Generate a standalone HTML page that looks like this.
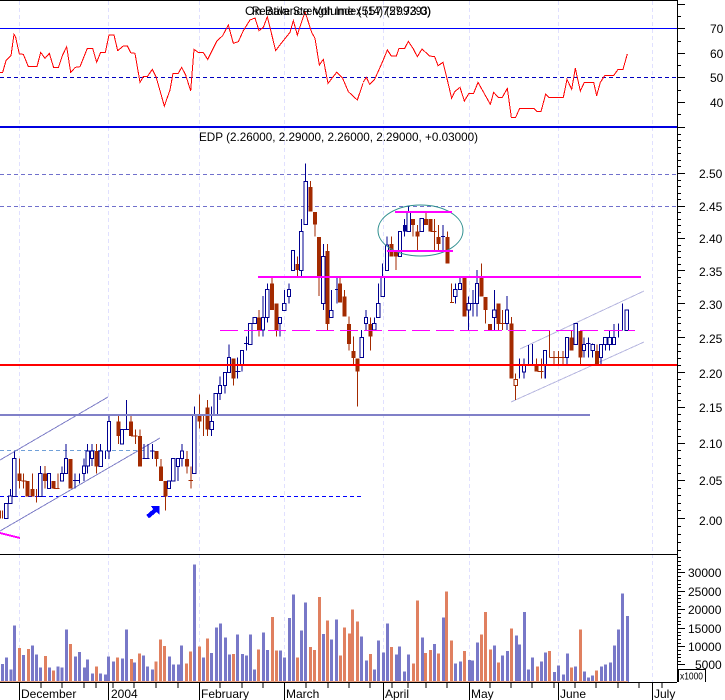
<!DOCTYPE html>
<html><head><meta charset="utf-8"><style>
html,body{margin:0;padding:0;background:#fff;width:725px;height:700px;overflow:hidden}
svg{display:block}
text{font-family:"Liberation Sans",Arial,sans-serif;font-size:12px;fill:#000}
</style></head><body>
<svg width="725" height="700" viewBox="0 0 725 700" xmlns="http://www.w3.org/2000/svg" shape-rendering="crispEdges">
<rect width="725" height="700" fill="#fff"/>
<!-- vertical grid -->
<path d="M19.5 1V682M108.5 1V682M199.5 1V682M284.5 1V682M383.5 1V682M469.5 1V682M558.5 1V682M652.5 1V682" stroke="#e0e0ff" stroke-width="1" stroke-dasharray="4 3" fill="none"/>
<!-- RSI panel -->
<path d="M0 28.5H677" stroke="#0000ff"/>
<path d="M0 77.5H677" stroke="#0000c0" stroke-dasharray="4 3"/>
<g fill="none" stroke="#ff0000" stroke-width="3" transform="scale(.33333)">
<path d="M0 217 8 217 18 182 33 167 42 103 47 112 58 162 70 163 85 200 111 200 122 157 135 175 148 160 161 203 175 203 187 167 200 140 212 217 226 202 240 200 262 145 278 145 290 187 302 157 316 157 327 105 342 105 353 152 370 138 382 138 392 158 405 160 420 247 430 230 442 230 457 208 468 230 493 318 510 270 519 220 535 220 545 202 557 225 572 273 582 148 596 158 610 158 623 178 650 124 668 107 685 75 700 130 715 125 730 92 750 60 765 54 777 92 790 82 802 50 827 152 842 132 870 97 880 62 892 105 915 35 935 97 945 115 958 195 970 178 984 250 1010 217 1028 235 1045 275 1072 300 1089 250"/>
</g>
<g fill="none" stroke="#ff0000" stroke-width="3" transform="translate(363,0) scale(.33333)">
<path d="M0 247 10 232 20 253 35 238 60 182 73 150 85 168 100 168 108 145 125 145 136 124 150 145 163 170 177 147 200 168 215 170 225 197 240 187 253 240 266 295 275 275 291 262 304 303 318 280 332 280 345 247 382 313 392 277 406 292 418 292 433 265 445 352 458 352 470 325 512 325 522 335 534 335 548 282 558 292 601 292 612 238 626 268 637 205 652 273 664 247 692 247 701 287 712 247 725 227 752 227 765 208 780 208 793 162"/>
</g>
<rect x="0" y="126" width="677" height="2" fill="#0000e0"/>
<text x="245" y="15" textLength="186" lengthAdjust="spacingAndGlyphs">On Balance Volume (55772993.0)</text>
<text x="252" y="15" textLength="179" lengthAdjust="spacingAndGlyphs">Relative Strength Index (14) (57.7293)</text>
<text x="199" y="141" textLength="279" lengthAdjust="spacingAndGlyphs">EDP (2.26000, 2.29000, 2.26000, 2.29000, +0.03000)</text>

<!-- price horizontal dashed -->
<path d="M0 174.5H677M0 206.5H677" stroke="#7070cc" stroke-dasharray="4 3"/>
<path d="M0 450.5H145" stroke="#70a0d8" stroke-dasharray="4 3"/>
<path d="M0 496.5H362" stroke="#0000ff" stroke-dasharray="4 3"/>
<!-- channels -->
<path d="M0 460 108 397M0 531 160 438" stroke="#8080c8" fill="none"/>
<path d="M520 349 644 291M511 402 644 342" stroke="#b8b8e0" fill="none"/>

<!-- Candles group A -->
<g transform="translate(0,340) scale(.33333)" stroke-width="3">
<path fill="none" stroke="#a32a00" d="M1 512V535M8 512V535M58 355V445M70 400V445M64 423H80M97 400V470M109 447V488M135 378V445M174 400V445M160 445H178M212 357V445M290 312V400M355 225V312M393 225V288M406 268V312M393 288H413M420 268V380M470 333V380M483 357V423M496 423V512M561 333V400M573 380V445M566 422H579M598 163V265M611 225V288M623 180V288"/>
<path fill="none" stroke="#000090" d="M31 447V490M43 335V470M121 378V470M147 400V445M186 380V423M198 312V400M225 400V445M219 422H238M238 400V430M252 355V423M263 312V400M276 312V378M302 312V380M316 333V357M327 225V357M366 268V312M380 180V268M362 268H392M432 312V357M444 312V357M428 355H448M457 312V357M450 333H463M507 423V445M520 355V423M534 355V423M546 312V380M583 200V400M635 225V288"/>
<path fill="#a32a00" stroke="none" d="M52 400h12V423h-12zM77 423h12V470h-12zM91 447h12V470h-12zM129 400h12V423h-12zM154 423h12V445h-12zM206 357h12V445h-12zM284 333h12V380h-12zM349 245h12V288h-12zM387 245h12V288h-12zM414 288h12V380h-12zM464 333h12V357h-12zM477 380h12V423h-12zM490 423h12V470h-12zM555 357h12V380h-12zM592 225h12V245h-12zM617 202h12V268h-12z"/>
<path fill="#fff" stroke="#000090" d="M14 490h10V535h-10zM26 468h10V490h-10zM38 355h10V470h-10zM116 400h10V470h-10zM142 400h10V445h-10zM181 400h10V423h-10zM193 355h10V400h-10zM247 378h10V400h-10zM258 333h10V378h-10zM271 333h10V355h-10zM297 333h10V380h-10zM322 245h10V333h-10zM361 268h10V312h-10zM502 423h10V445h-10zM515 355h10V423h-10zM529 355h10V380h-10zM541 333h10V355h-10zM578 225h10V400h-10zM630 245h10V268h-10z"/>
</g>
<!-- Candles group B -->
<g transform="translate(210,150) scale(.33333)" stroke-width="3">
<path fill="none" stroke="#a32a00" d="M71 625V707M147 480V560M186 382V480M199 460V560M262 320V380M302 93V185M315 186V260M327 261V438M353 282V540M390 382V458M403 420V500M417 500V602M430 560V642M443 625V770M481 502V602"/>
<path fill="none" stroke="#000090" d="M5 770V795M30 680V750M45 667V730M57 583V667M83 623V686M75 664H92M96 602V664M109 560V602M102 580H115M121 520V583M134 502V520M159 438V560M172 400V518M210 502V560M223 420V481M237 400V460M249 302V361M274 207V380M287 40V223M340 282V480M364 420V502M381 380V460M375 418H387M455 540V622M468 480V540M493 502V540M505 400V502"/>
<path fill="#a32a00" stroke="none" d="M65 625h12V686h-12zM141 502h12V540h-12zM180 400h12V480h-12zM193 460h12V540h-12zM256 342h12V360h-12zM296 111h12V185h-12zM309 186h12V224h-12zM321 261h12V380h-12zM347 303h12V522h-12zM384 400h12V458h-12zM397 440h12V500h-12zM411 522h12V582h-12zM424 603h12V624h-12zM437 625h12V665h-12zM475 522h12V560h-12z"/>
<path fill="#fff" stroke="#000090" d="M12 730h10V795h-10zM25 706h10V730h-10zM40 667h10V706h-10zM52 622h10V667h-10zM91 602h10V645h-10zM116 520h10V583h-10zM129 502h10V520h-10zM154 502h10V540h-10zM167 418h10V502h-10zM205 502h10V520h-10zM218 460h10V481h-10zM232 418h10V440h-10zM244 302h10V361h-10zM269 244h10V361h-10zM282 94h10V223h-10zM335 320h10V460h-10zM359 481h10V502h-10zM450 562h10V622h-10zM463 502h10V520h-10zM488 520h10V540h-10zM500 460h10V502h-10z"/>
</g>
<!-- Candles group C -->
<g transform="translate(370,190) scale(.33333)" stroke-width="3">
<path fill="none" stroke="#a32a00" d="M64 140V200M78 180V240M129 87V140M142 105V180M168 68V105M182 87V124M193 87V180M182 124H199M205 105V180M232 125V221M245 280V338M240 338H252M335 220V320M347 321V400M360 402V420M386 340V420M398 360V420M390 400H405"/>
<path fill="none" stroke="#000090" d="M38 220V320M51 140V242M90 124V200M104 87V140M116 48V124M155 85V124M219 105V180M213 140H225M256 280V340M270 262V298M296 320V420M309 300V380M303 340H315M321 240V380M373 300V420M411 318V420M449 505V566M443 525H455M462 505V566M475 465V525M488 462V525M526 482V566"/>
<path fill="#a32a00" stroke="none" d="M58 162h12V200h-12zM72 180h12V200h-12zM123 87h12V105h-12zM136 125h12V140h-12zM162 87h12V105h-12zM176 87h12V124h-12zM199 141h12V162h-12zM226 141h12V221h-12zM277 262h12V380h-12zM329 262h12V320h-12zM341 321h12V360h-12zM354 402h12V420h-12zM380 340h12V402h-12z"/>
<path fill="#000090" stroke="none" d="M99 105h10V125h-10z"/>
<path fill="#fff" stroke="#000090" d="M33 262h10V320h-10zM46 165h10V242h-10zM85 124h10V200h-10zM111 68h10V124h-10zM150 85h10V124h-10zM251 298h10V320h-10zM265 280h10V298h-10zM291 340h10V360h-10zM316 280h10V340h-10zM368 360h10V382h-10zM406 360h10V400h-10z"/>
</g>
<!-- Candles group D -->
<g transform="translate(500,280) scale(.33333)" stroke-width="3">
<path fill="none" stroke="#a32a00" d="M34 111V131M47 280V360M110 235V255M124 235V296M112 275H130M148 152V233M148 232H201M162 213V255M175 213V255M189 213V255M215 150V172M241 153V255M291 193V252"/>
<path fill="none" stroke="#000090" d="M58 235V296M52 255H64M72 235V296M85 213V255M98 194V255M135 212V296M201 172V255M227 131V193M252 172V233M265 172V233M258 190H272M278 190V233M303 193V252M316 172V212M329 152V212M342 132V193M355 130V172M367 70V152M380 90V152"/>
<path fill="#a32a00" stroke="none" d="M28 131h12V296h-12zM104 255h12V275h-12zM209 172h12V212h-12zM235 153h12V233h-12zM285 213h12V252h-12z"/>
<path fill="#fff" stroke="#a32a00" d="M42 298h10V316h-10z"/>
<path fill="#fff" stroke="#000090" d="M67 255h10V276h-10zM130 212h10V255h-10zM196 172h10V233h-10zM222 131h10V193h-10zM247 193h10V212h-10zM273 193h10V212h-10zM298 193h10V233h-10zM311 172h10V193h-10zM324 172h10V193h-10zM337 172h10V193h-10zM375 90h10V152h-10z"/>
</g>

<!-- Horizontal overlays -->
<ellipse cx="420.5" cy="230.5" rx="42.5" ry="25.5" fill="none" stroke="#2f8f8f" stroke-width="1" shape-rendering="auto"/>
<rect x="395" y="211" width="57" height="2" fill="#ff00ff"/>
<rect x="387" y="250" width="66" height="2" fill="#ff00ff"/>
<rect x="258" y="276" width="383" height="2" fill="#ff00ff"/>
<path d="M220 330.5H635" stroke="#ff00ff" stroke-dasharray="18 6"/>
<rect x="0" y="364" width="677" height="2" fill="#ff0000"/>
<rect x="0" y="414" width="590" height="2" fill="#8080c8"/>
<path d="M0 533 20 538" stroke="#ff00ff" stroke-width="2" fill="none"/>
<polygon transform="translate(0,340) scale(.33333)" points="452,498 479,498 479,525 470,516 447,535 439,525 460,507" fill="#0000ff"/>

<!-- Volume -->
<rect x="0" y="554" width="677" height="1" fill="#000"/>
<g transform="translate(0,550) scale(.33333)" stroke-width="9" fill="none">
<path stroke="#7878c8" d="M7 396V342M19 396V323M33 396V358M43 396V227M70 396V315M97 396V286M109 396V313M121 396V352M148 396V353M174 396V349M186 396V352M199 396V238M226 396V320M238 396V306M253 396V352M262 396V328M277 396V370M301 396V370M316 396V373M325 396V320M340 396V334M367 396V326M379 396V238M403 396V337M430 396V317M442 396V349M457 396V358M508 396V320M520 396V343M535 396V343M544 396V286M583 396V43M610 396V323M634 396V309M649 396V233M661 396V221M676 396V262M688 396V313M713 396V253"/>
<path stroke="#e08060" d="M58 396V294M85 396V297M136 396V318M160 396V362M211 396V282M289 396V350M352 396V323M394 396V327M418 396V311M468 396V334M481 396V268M493 396V288M559 396V340M571 396V305M598 396V289M622 396V265M700 396V312"/>
</g>
<g transform="translate(240,550) scale(.33333)" stroke-width="9" fill="none">
<path stroke="#7878c8" d="M7 396V312M19 396V317M31 396V253M43 396V358M70 396V247M82 396V300M121 396V301M133 396V323M148 396V204M160 396V134M184 396V241M196 396V157M250 396V252M274 396V268M289 396V209M364 396V259M379 396V332M403 396V358M415 396V271M430 396V308M442 396V221M469 396V313M478 396V289M493 396V364M505 396V314M547 396V262M583 396V282M610 396V202M646 396V340M661 396V335M688 396V330M697 396V331M712 396V277"/>
<path stroke="#e08060" d="M55 396V298M97 396V201M109 396V301M172 396V323M211 396V291M223 396V300M238 396V141M262 396V211M301 396V317M313 396V232M328 396V250M337 396V178M352 396V215M391 396V312M454 396V291M520 396V341M532 396V151M556 396V309M571 396V300M595 396V310M619 396V124M634 396V271M673 396V303"/>
</g>
<g transform="translate(480,550) scale(.33333)" stroke-width="9" fill="none">
<path stroke="#7878c8" d="M43 396V286M67 396V317M82 396V303M109 396V256M118 396V283M133 396V186M145 396V358M157 396V323M184 396V334M196 396V307M223 396V366M235 396V346M250 396V373M262 396V310M286 396V349M313 396V364M325 396V382M337 396V376M364 396V349M376 396V343M391 396V337M403 396V286M415 396V238M427 396V130M442 396V198"/>
<path stroke="#e08060" d="M4 396V253M16 396V186M31 396V298M55 396V337M94 396V236M172 396V349M208 396V303M274 396V352M301 396V239M349 396V361"/>
</g>
<rect x="0" y="681" width="628" height="1" fill="#e8a080"/>
<rect x="0" y="682" width="677" height="1" fill="#000"/>
<!-- date ticks -->
<path d="M19.5 682V700M108.5 682V700M199.5 682V700M284.5 682V700M383.5 682V700M469.5 682V700M558.5 682V700M652.5 682V700" stroke="#000"/>
<path d="M41 682v6M62 682v6M84 682v6M96 682v6M113 682v6M134 682v6M156 682v6M178 682v6M220 682v6M242 682v6M263 682v6M306 682v6M328 682v6M349 682v6M370 682v6M392 682v6M408 682v6M426 682v6M447 682v6M490 682v6M511 682v6M532 682v6M554 682v6M575 682v6M596 682v6M618 682v6M639 682v6M662 682v6" stroke="#000"/>
<text x="21" y="698">December</text><text x="111" y="698">2004</text><text x="201" y="698">February</text><text x="286" y="698">March</text><text x="385" y="698">April</text><text x="471" y="698">May</text><text x="560" y="698">June</text><text x="654" y="698">July</text>

<!-- right axis -->
<rect x="0" y="0" width="677" height="1" fill="#000"/>
<rect x="677" y="0" width="1" height="682" fill="#000"/>
<path d="M677 4.5h8M677 28.5h8M677 53.5h8M677 77.5h8M677 102.5h8M677 127.5h8M677 173.5h8M677 206.5h8M677 238.5h8M677 270.5h8M677 303.5h8M677 337.5h8M677 372.5h8M677 407.5h8M677 443.5h8M677 480.5h8M677 518.5h8M677 572.5h8M677 591.5h8M677 609.5h8M677 628.5h8M677 646.5h8M677 664.5h8" stroke="#000"/>
<path d="M677 16.5h4M677 41.5h4M677 65.5h4M677 90.5h4M677 114.5h4M677 134.5h4M677 140.5h4M677 147.5h4M677 153.5h4M677 160.5h4M677 166.5h4M677 180.5h4M677 186.5h4M677 193.5h4M677 199.5h4M677 212.5h4M677 219.5h4M677 225.5h4M677 232.5h4M677 245.5h4M677 251.5h4M677 257.5h4M677 264.5h4M677 277.5h4M677 283.5h4M677 290.5h4M677 296.5h4M677 310.5h4M677 317.5h4M677 323.5h4M677 330.5h4M677 344.5h4M677 351.5h4M677 358.5h4M677 365.5h4M677 379.5h4M677 386.5h4M677 393.5h4M677 400.5h4M677 414.5h4M677 421.5h4M677 429.5h4M677 436.5h4M677 450.5h4M677 458.5h4M677 465.5h4M677 473.5h4M677 488.5h4M677 495.5h4M677 503.5h4M677 510.5h4M677 526.5h4M677 534.5h4M677 542.5h4M677 550.5h4M677 557.5h4M677 561.5h4M677 565.5h4M677 569.5h4M677 576.5h4M677 580.5h4M677 584.5h4M677 587.5h4M677 595.5h4M677 598.5h4M677 602.5h4M677 606.5h4M677 613.5h4M677 617.5h4M677 621.5h4M677 624.5h4M677 632.5h4M677 635.5h4M677 639.5h4M677 643.5h4M677 650.5h4M677 654.5h4M677 657.5h4M677 661.5h4" stroke="#000"/>
<text x="710" y="33">70</text><text x="710" y="58">60</text><text x="710" y="82">50</text><text x="710" y="107">40</text>
<text x="699" y="178">2.50</text><text x="699" y="211">2.45</text><text x="699" y="243">2.40</text><text x="699" y="276">2.35</text><text x="699" y="309">2.30</text><text x="699" y="343">2.25</text><text x="699" y="378">2.20</text><text x="699" y="412">2.15</text><text x="699" y="448">2.10</text><text x="699" y="485">2.05</text><text x="699" y="525">2.00</text>
<text x="688" y="577">30000</text><text x="688" y="596">25000</text><text x="688" y="614">20000</text><text x="688" y="633">15000</text><text x="688" y="651">10000</text><text x="695" y="669">5000</text>
<path d="M678.5 682V669.5H705.5V682" fill="#fff" stroke="#000"/>
<text x="680" y="679.5" style="font-size:10px" textLength="23" lengthAdjust="spacingAndGlyphs">x1000</text>
</svg>
</body></html>
